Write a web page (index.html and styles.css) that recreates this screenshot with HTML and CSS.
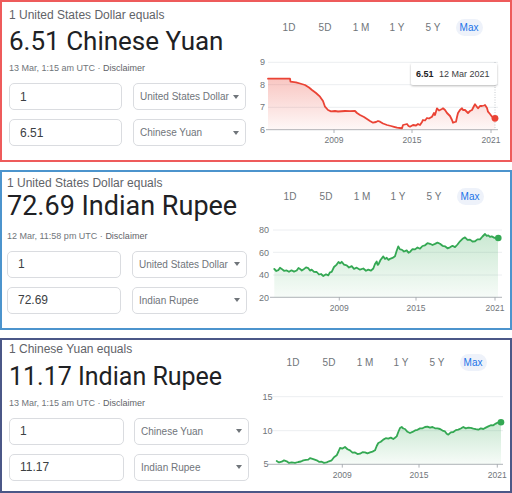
FILE: index.html
```html
<!DOCTYPE html>
<html lang="en">
<head>
<meta charset="utf-8">
<title>Currency converters</title>
<link rel="stylesheet" href="styles.css">
</head>
<body>
<main class="page">

  <section class="panel red">
    <div class="conv">
      <div class="title">1 United States Dollar equals</div>
      <div class="big">6.51 Chinese Yuan</div>
      <div class="date">13 Mar, 1:15 am UTC · <span class="disc">Disclaimer</span></div>
      <div class="row">
        <div class="box num">1</div>
        <div class="box sel"><span>United States Dollar</span><i class="caret"></i></div>
      </div>
      <div class="row">
        <div class="box num">6.51</div>
        <div class="box sel"><span>Chinese Yuan</span><i class="caret"></i></div>
      </div>
    </div>
    <div class="chart">
      <div class="tabs"><span>1D</span><span>5D</span><span>1 M</span><span>1 Y</span><span>5 Y</span><span class="on">Max</span></div>
      <svg class="plot" width="260" height="114" viewBox="250 45 260 114">
        <defs>
          <linearGradient id="g1" x1="0" y1="0" x2="0" y2="1">
            <stop offset="0" stop-color="#ea4335" stop-opacity=".30"/>
            <stop offset="1" stop-color="#ea4335" stop-opacity=".04"/>
          </linearGradient>
          <filter id="sh" x="-10%" y="-30%" width="120%" height="170%">
            <feDropShadow dx="0" dy="1" stdDeviation="1.2" flood-color="#000" flood-opacity=".28"/>
          </filter>
        </defs>
        <g class="grid">
          <line x1="268" y1="62.3" x2="498" y2="62.3"/>
          <line x1="268" y1="84.7" x2="498" y2="84.7"/>
          <line x1="268" y1="107.3" x2="498" y2="107.3"/>
        </g>
        <line class="axis" x1="266" y1="129.7" x2="498" y2="129.7"/>
        <g class="axis">
          <line x1="334" y1="129.7" x2="334" y2="133"/>
          <line x1="412" y1="129.7" x2="412" y2="133"/>
          <line x1="491" y1="129.7" x2="491" y2="133"/>
        </g>
        <g class="ylab">
          <text x="265" y="65.3">9</text>
          <text x="265" y="87.7">8</text>
          <text x="265" y="110.3">7</text>
          <text x="265" y="132.7">6</text>
        </g>
        <g class="xlab">
          <text x="334" y="143">2009</text>
          <text x="412" y="143">2015</text>
          <text x="491" y="143">2021</text>
        </g>
        <path class="area" fill="url(#g1)" d="M268,78.7 L290,78.7 L290.5,81.7 L296,82.3 L300,83.5 L305,85 L309,87.5 L312,90 L316,93 L320,96.7 L323,101 L325,106.7 L328,110 L331,111.3 L335,111 L338,111.5 L345,111 L350,111.2 L355,111 L357,113 L360,115 L364,117 L367,119 L370,121 L373,122.7 L376,122 L378,121 L380,121.7 L383,123.5 L387,125 L391,126 L394,126.8 L397,127.7 L400,128 L402,128.3 L403,125 L405,124.5 L407,124 L408.5,126 L410,126.7 L413,125 L416,125.5 L418,124 L420,125 L422,122 L423,120 L425,120.5 L427,118 L429,118.5 L432,116.7 L434,113 L435,115 L437,108.3 L439,110.5 L440,110 L442,109 L443,108.3 L445,110 L447,113 L449,115 L450,116 L452,120 L453,122.7 L455,122 L456,121.7 L457,117 L458,113 L460,110 L462,108.3 L463,110 L465,110 L467,112 L468,113 L470,111 L472,110 L474,106 L475,104.3 L477,107 L478,108.3 L480,106 L482,106 L484,105.5 L485,105 L487,108 L488,111.7 L490,114 L492,116.7 L494,118 L495,118.3 L495,129.7 L268,129.7 Z"/>
        <path class="line redline" d="M268,78.7 L290,78.7 L290.5,81.7 L296,82.3 L300,83.5 L305,85 L309,87.5 L312,90 L316,93 L320,96.7 L323,101 L325,106.7 L328,110 L331,111.3 L335,111 L338,111.5 L345,111 L350,111.2 L355,111 L357,113 L360,115 L364,117 L367,119 L370,121 L373,122.7 L376,122 L378,121 L380,121.7 L383,123.5 L387,125 L391,126 L394,126.8 L397,127.7 L400,128 L402,128.3 L403,125 L405,124.5 L407,124 L408.5,126 L410,126.7 L413,125 L416,125.5 L418,124 L420,125 L422,122 L423,120 L425,120.5 L427,118 L429,118.5 L432,116.7 L434,113 L435,115 L437,108.3 L439,110.5 L440,110 L442,109 L443,108.3 L445,110 L447,113 L449,115 L450,116 L452,120 L453,122.7 L455,122 L456,121.7 L457,117 L458,113 L460,110 L462,108.3 L463,110 L465,110 L467,112 L468,113 L470,111 L472,110 L474,106 L475,104.3 L477,107 L478,108.3 L480,106 L482,106 L484,105.5 L485,105 L487,108 L488,111.7 L490,114 L492,116.7 L494,118 L495,118.3"/>
        <line class="cursor" x1="495" y1="62" x2="495" y2="129.7"/>
        <circle class="dotred" cx="495" cy="118.3" r="3.4"/>
        <rect class="tipbox" filter="url(#sh)" x="411" y="63" width="86" height="22" rx="2"/>
        <text class="tip"><tspan class="tipv" x="416" y="77.3">6.51</tspan><tspan x="439" y="77.3">12 Mar 2021</tspan></text>
      </svg>
    </div>
  </section>

  <section class="panel blue">
    <div class="conv">
      <div class="title">1 United States Dollar equals</div>
      <div class="big">72.69 Indian Rupee</div>
      <div class="date">12 Mar, 11:58 pm UTC · <span class="disc">Disclaimer</span></div>
      <div class="row">
        <div class="box num">1</div>
        <div class="box sel"><span>United States Dollar</span><i class="caret"></i></div>
      </div>
      <div class="row">
        <div class="box num">72.69</div>
        <div class="box sel"><span>Indian Rupee</span><i class="caret"></i></div>
      </div>
    </div>
    <div class="chart">
      <div class="tabs"><span>1D</span><span>5D</span><span>1 M</span><span>1 Y</span><span>5 Y</span><span class="on">Max</span></div>
      <svg class="plot" width="260" height="112" viewBox="250 215 260 112">
        <defs>
          <linearGradient id="g2" x1="0" y1="0" x2="0" y2="1">
            <stop offset="0" stop-color="#34a853" stop-opacity=".26"/>
            <stop offset="1" stop-color="#34a853" stop-opacity=".04"/>
          </linearGradient>
        </defs>
        <g class="grid">
          <line x1="273" y1="230" x2="502" y2="230"/>
          <line x1="273" y1="252.3" x2="502" y2="252.3"/>
          <line x1="273" y1="275" x2="502" y2="275"/>
        </g>
        <line class="axis" x1="270" y1="297.3" x2="502" y2="297.3"/>
        <g class="axis">
          <line x1="339.3" y1="297.3" x2="339.3" y2="300.6"/>
          <line x1="416" y1="297.3" x2="416" y2="300.6"/>
          <line x1="495" y1="297.3" x2="495" y2="300.6"/>
        </g>
        <g class="ylab">
          <text x="269" y="233.2">80</text>
          <text x="269" y="255.5">60</text>
          <text x="269" y="278.2">40</text>
          <text x="269" y="300.5">20</text>
        </g>
        <g class="xlab">
          <text x="339.3" y="311">2009</text>
          <text x="416" y="311">2015</text>
          <text x="495" y="311">2021</text>
        </g>
        <path class="area" fill="url(#g2)" d="M274.3,269 L276.3,271 L278.3,270.2 L280,267.8 L281.7,268.9 L284,270.8 L286.7,270.4 L289,271.8 L291.5,270.3 L294,271.6 L296.7,270.5 L298.5,268 L300,268.9 L301.8,270.5 L303.3,269.6 L306,267.4 L308.3,268.2 L310,270.6 L311.7,269.6 L314,271.8 L316.7,272 L319,274.5 L321,274 L323.3,276 L326,274.3 L328.3,275.4 L330,272.3 L331.7,271.9 L334,267 L336.7,264.6 L338.5,262 L340,263.4 L341.7,261.8 L344,264.6 L346.7,265.3 L349,267.5 L351.7,266.1 L354,268.8 L356.7,267.7 L360,269.7 L363.3,268.5 L366,270.8 L368.3,269.6 L371,270.7 L373.3,268.5 L375,264 L376.7,261.4 L377.6,264.8 L378.3,264.6 L380.5,260 L383.3,256.4 L385,258.9 L386.7,257.8 L388.5,259.9 L390,258.8 L392.5,257.9 L395,256.2 L396.6,251 L398.3,246.4 L400,249.4 L401.7,249.6 L404,251.5 L406.7,250.4 L408.5,252.8 L410,251.9 L412.5,249.2 L415,249.4 L417.5,247.5 L420,248.7 L422.5,246 L425,245.3 L427.5,243.2 L430,243.8 L432.5,245 L435,243.9 L437.5,242.6 L440,243.7 L442.5,245.8 L445,246.3 L447.5,248.3 L450,247.3 L452.5,245.8 L455,247.1 L457.5,244.5 L460,241.3 L462.5,238.8 L465,237.4 L467.5,239.8 L470,239.6 L472.5,241.5 L475,241.3 L477.5,239.4 L480,239.4 L482.5,236.5 L485,234 L486.7,235.8 L488.3,235.3 L490,236.9 L491.7,236.4 L494.5,237.9 L498,237.8 L498,297.3 L274.3,297.3 Z"/>
        <path class="line greenline" d="M274.3,269 L276.3,271 L278.3,270.2 L280,267.8 L281.7,268.9 L284,270.8 L286.7,270.4 L289,271.8 L291.5,270.3 L294,271.6 L296.7,270.5 L298.5,268 L300,268.9 L301.8,270.5 L303.3,269.6 L306,267.4 L308.3,268.2 L310,270.6 L311.7,269.6 L314,271.8 L316.7,272 L319,274.5 L321,274 L323.3,276 L326,274.3 L328.3,275.4 L330,272.3 L331.7,271.9 L334,267 L336.7,264.6 L338.5,262 L340,263.4 L341.7,261.8 L344,264.6 L346.7,265.3 L349,267.5 L351.7,266.1 L354,268.8 L356.7,267.7 L360,269.7 L363.3,268.5 L366,270.8 L368.3,269.6 L371,270.7 L373.3,268.5 L375,264 L376.7,261.4 L377.6,264.8 L378.3,264.6 L380.5,260 L383.3,256.4 L385,258.9 L386.7,257.8 L388.5,259.9 L390,258.8 L392.5,257.9 L395,256.2 L396.6,251 L398.3,246.4 L400,249.4 L401.7,249.6 L404,251.5 L406.7,250.4 L408.5,252.8 L410,251.9 L412.5,249.2 L415,249.4 L417.5,247.5 L420,248.7 L422.5,246 L425,245.3 L427.5,243.2 L430,243.8 L432.5,245 L435,243.9 L437.5,242.6 L440,243.7 L442.5,245.8 L445,246.3 L447.5,248.3 L450,247.3 L452.5,245.8 L455,247.1 L457.5,244.5 L460,241.3 L462.5,238.8 L465,237.4 L467.5,239.8 L470,239.6 L472.5,241.5 L475,241.3 L477.5,239.4 L480,239.4 L482.5,236.5 L485,234 L486.7,235.8 L488.3,235.3 L490,236.9 L491.7,236.4 L494.5,237.9 L498,237.8"/>
        <circle class="dotgreen" cx="498.3" cy="238" r="3.3"/>
      </svg>
    </div>
  </section>

  <section class="panel navy">
    <div class="conv">
      <div class="title">1 Chinese Yuan equals</div>
      <div class="big">11.17 Indian Rupee</div>
      <div class="date">13 Mar, 1:15 am UTC · <span class="disc">Disclaimer</span></div>
      <div class="row">
        <div class="box num">1</div>
        <div class="box sel"><span>Chinese Yuan</span><i class="caret"></i></div>
      </div>
      <div class="row">
        <div class="box num">11.17</div>
        <div class="box sel"><span>Indian Rupee</span><i class="caret"></i></div>
      </div>
    </div>
    <div class="chart">
      <div class="tabs"><span>1D</span><span>5D</span><span>1 M</span><span>1 Y</span><span>5 Y</span><span class="on">Max</span></div>
      <svg class="plot" width="260" height="107" viewBox="250 383 260 107">
        <defs>
          <linearGradient id="g3" x1="0" y1="0" x2="0" y2="1">
            <stop offset="0" stop-color="#34a853" stop-opacity=".26"/>
            <stop offset="1" stop-color="#34a853" stop-opacity=".04"/>
          </linearGradient>
        </defs>
        <g class="grid">
          <line x1="270" y1="396.7" x2="503" y2="396.7"/>
          <line x1="270" y1="430.7" x2="503" y2="430.7"/>
        </g>
        <line class="axis" x1="268" y1="464.3" x2="503" y2="464.3"/>
        <g class="axis">
          <line x1="342.3" y1="464.3" x2="342.3" y2="467.6"/>
          <line x1="419" y1="464.3" x2="419" y2="467.6"/>
          <line x1="497.3" y1="464.3" x2="497.3" y2="467.6"/>
        </g>
        <g class="ylab left">
          <text x="262.5" y="399.8">15</text>
          <text x="262.5" y="433.8">10</text>
          <text x="263.5" y="467.4">5</text>
        </g>
        <g class="xlab">
          <text x="342.3" y="478">2009</text>
          <text x="419" y="478">2015</text>
          <text x="497.3" y="478">2021</text>
        </g>
        <path class="area" fill="url(#g3)" d="M276.7,461 L279,462.4 L281.7,461.7 L284,460.4 L286.7,461.3 L289,462.9 L291.7,462.4 L295,462.8 L298.3,462 L301,461.5 L303.3,460.4 L306,459.9 L308.3,459.6 L310,458.1 L311.7,458.6 L314,459.3 L316.7,460.3 L319,461.8 L321.7,461.7 L324,462.9 L326.7,462.4 L329,461.3 L331.7,460.3 L334,457.2 L336.7,455.3 L338.5,451.5 L340,448 L342.5,448.6 L345,447 L347.5,449.2 L350,450.4 L352.5,452.6 L355,452.4 L357.5,454.1 L360,453.7 L362.5,452.2 L365,452.3 L367.5,453.3 L370,452.4 L372.5,451.6 L375,450.3 L376.7,446 L378.3,443 L380.8,441.8 L383.3,439.6 L385.8,438.2 L388.3,438.6 L390.8,437.6 L393.3,439 L395,437.8 L396.7,436.4 L398.3,432 L400,428 L401.7,427 L403.3,428.5 L405,429 L407.5,431.8 L410,433 L412.5,431.9 L415,430.4 L417.5,429.8 L420,428.4 L422.5,428.3 L425,427 L427.5,426.6 L430,427.6 L432.5,427 L435,428.3 L437.5,428.4 L440,429 L442.5,430.6 L445,431.4 L446.7,433.8 L448.3,434.7 L450.8,432.4 L453.3,432 L455.8,430.1 L458.3,429.6 L460.8,428.5 L463.3,427 L465.8,428.4 L468.3,427.7 L470.8,427.8 L473.3,428.6 L475.8,429.2 L478.3,429.7 L480.8,428.4 L483.3,429 L485.8,427.6 L488.3,426.4 L490.8,425.2 L493.3,425.3 L495.8,423.6 L498.3,422.3 L501,422.3 L501,464.3 L276.7,464.3 Z"/>
        <path class="line greenline" d="M276.7,461 L279,462.4 L281.7,461.7 L284,460.4 L286.7,461.3 L289,462.9 L291.7,462.4 L295,462.8 L298.3,462 L301,461.5 L303.3,460.4 L306,459.9 L308.3,459.6 L310,458.1 L311.7,458.6 L314,459.3 L316.7,460.3 L319,461.8 L321.7,461.7 L324,462.9 L326.7,462.4 L329,461.3 L331.7,460.3 L334,457.2 L336.7,455.3 L338.5,451.5 L340,448 L342.5,448.6 L345,447 L347.5,449.2 L350,450.4 L352.5,452.6 L355,452.4 L357.5,454.1 L360,453.7 L362.5,452.2 L365,452.3 L367.5,453.3 L370,452.4 L372.5,451.6 L375,450.3 L376.7,446 L378.3,443 L380.8,441.8 L383.3,439.6 L385.8,438.2 L388.3,438.6 L390.8,437.6 L393.3,439 L395,437.8 L396.7,436.4 L398.3,432 L400,428 L401.7,427 L403.3,428.5 L405,429 L407.5,431.8 L410,433 L412.5,431.9 L415,430.4 L417.5,429.8 L420,428.4 L422.5,428.3 L425,427 L427.5,426.6 L430,427.6 L432.5,427 L435,428.3 L437.5,428.4 L440,429 L442.5,430.6 L445,431.4 L446.7,433.8 L448.3,434.7 L450.8,432.4 L453.3,432 L455.8,430.1 L458.3,429.6 L460.8,428.5 L463.3,427 L465.8,428.4 L468.3,427.7 L470.8,427.8 L473.3,428.6 L475.8,429.2 L478.3,429.7 L480.8,428.4 L483.3,429 L485.8,427.6 L488.3,426.4 L490.8,425.2 L493.3,425.3 L495.8,423.6 L498.3,422.3 L501,422.3"/>
        <circle class="dotgreen" cx="501" cy="422.3" r="3.3"/>
      </svg>
    </div>
  </section>

</main>
</body>
</html>
```

FILE: styles.css
```css
* { box-sizing: border-box; }

html, body {
  margin: 0;
  padding: 0;
  background: #ffffff;
}

body {
  font-family: "Liberation Sans", Arial, sans-serif;
  color: #202124;
  width: 512px;
  height: 493px;
  overflow: hidden;
}

.page {
  display: flex;
  flex-direction: column;
}

.panel {
  display: flex;
  width: 512px;
  border: 2px solid;
}

.red  { height: 162px; border-color: #ee5b5b; }
.blue { height: 160px; margin-top: 8px; border-color: #4c94cd; }
.navy { height: 155px; margin-top: 8px; border-color: #4b5787; }

/* ---------- left: converter ---------- */
.conv {
  width: 248px;
  flex: none;
  display: flex;
  flex-direction: column;
}

.title {
  font-size: 12px;
  line-height: 14px;
  color: #5f6368;
  white-space: nowrap;
}

.big {
  font-family: Roboto, "Liberation Sans", Arial, sans-serif;
  color: #202124;
  white-space: nowrap;
}

.date {
  font-size: 9px;
  line-height: 11px;
  color: #70757a;
  white-space: nowrap;
}

.disc { color: #5f6368; }

.row {
  display: flex;
}

.box {
  height: 27px;
  border: 1px solid #dadce0;
  border-radius: 5px;
  display: flex;
  align-items: center;
}

.num {
  padding-left: 10px;
  font-size: 12px;
  color: #3c4043;
}

.sel {
  justify-content: space-between;
  padding: 0 6px 0 6px;
  font-size: 10px;
  color: #70757a;
}

.caret {
  width: 0;
  height: 0;
  border-left: 3.5px solid transparent;
  border-right: 3.5px solid transparent;
  border-top: 4px solid #70757a;
}

/* panel 1 */
.red .conv { padding: 6px 0 0 7px; }
.red .big { margin-top: 4px; font-size: 26px; line-height: 30px; }
.red .date { margin-top: 7px; }
.red .row { margin-top: 9px; gap: 11px; }
.red .row:nth-of-type(1) { margin-top: 14px; }
.red .row .num { width: 113px; }
.red .row .sel { width: 113px; }

/* panel 2 */
.blue .conv { padding: 3.5px 0 0 5px; }
.blue .big { margin-top: 1px; font-size: 27px; line-height: 31px; }
.blue .date { margin-top: 9px; }
.blue .row { margin-top: 9px; gap: 11px; }
.blue .row:nth-of-type(1) { margin-top: 14px; }
.blue .row .num { width: 114px; }
.blue .row .sel { width: 115px; }

/* panel 3 */
.navy .conv { padding: 2px 0 0 7px; }
.navy .big { margin-top: 6px; font-size: 25px; line-height: 29px; }
.navy .date { margin-top: 6.5px; }
.navy .row { margin-top: 9px; gap: 10px; }
.navy .row:nth-of-type(1) { margin-top: 14px; }
.navy .row .num { width: 115px; }
.navy .row .sel { width: 115px; }

/* ---------- right: chart ---------- */
.chart {
  flex: 1;
  display: flex;
  flex-direction: column;
}

.tabs {
  height: 43px;
  display: flex;
  align-items: center;
  font-size: 10px;
  color: #70757a;
}

.tabs span {
  width: 36px;
  text-align: center;
}

.tabs .on {
  width: 27px;
  height: 17px;
  line-height: 17px;
  margin-left: 4.5px;
  border-radius: 9px;
  background: #eef2fa;
  color: #1a73e8;
}

.red .tabs  { padding: 7px 0 0 21px; }
.blue .tabs { padding: 5px 0 0 22px; }
.navy .tabs { padding: 1px 0 0 25px; }

.plot {
  display: block;
  overflow: visible;
}

.grid line {
  stroke: #eceef1;
  stroke-width: 1;
}

.axis, .axis line {
  stroke: #9aa0a6;
  stroke-width: 0.8;
}

.ylab text {
  font-family: "Liberation Sans", Arial, sans-serif;
  font-size: 9px;
  fill: #70757a;
  text-anchor: end;
}

.ylab.left text { text-anchor: start; }

.xlab text {
  font-family: "Liberation Sans", Arial, sans-serif;
  font-size: 8.5px;
  fill: #70757a;
  text-anchor: middle;
}

.area { stroke: none; }

.line {
  fill: none;
  stroke-width: 1.8;
  stroke-linejoin: round;
  stroke-linecap: round;
}

.redline { stroke: #ea4335; }
.greenline { stroke: #34a853; }

.dotred { fill: #ea4335; }
.dotgreen { fill: #34a853; }

.cursor {
  stroke: #b8bcc2;
  stroke-width: 0.8;
  stroke-dasharray: 1 1.5;
}

.tipbox { fill: #ffffff; }

.tip {
  font-family: "Liberation Sans", Arial, sans-serif;
  font-size: 9px;
  fill: #3c4043;
}

.tip .tipv {
  font-weight: bold;
  fill: #202124;
}
```
